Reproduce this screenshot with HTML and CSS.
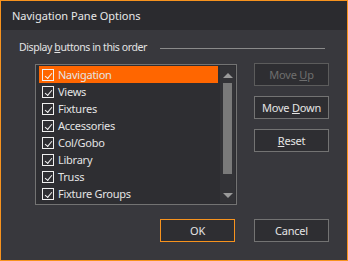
FILE: index.html
```html
<!DOCTYPE html>
<html lang="en">
<head>
    <meta charset="UTF-8">
    <title>Navigation Pane Options</title>
    <link rel="stylesheet" href="styles.css">
</head>
<body>
    <div class="window">
        <div class="titlebar">Navigation Pane Options</div>

        <div class="content">
            <div class="group-header">
                <span class="group-label">Display <u>b</u>uttons in this order</span>
                <span class="group-line"></span>
            </div>

            <div class="main-row">
                <div class="listbox">
                    <ul class="items">
                        <li class="selected"><span class="check"></span>Navigation</li>
                        <li><span class="check"></span>Views</li>
                        <li><span class="check"></span>Fixtures</li>
                        <li><span class="check"></span>Accessories</li>
                        <li><span class="check"></span>Col/Gobo</li>
                        <li><span class="check"></span>Library</li>
                        <li><span class="check"></span>Truss</li>
                        <li><span class="check"></span>Fixture Groups</li>
                    </ul>
                    <div class="scrollbar">
                        <span class="arrow up"></span>
                        <div class="track"><div class="thumb"></div></div>
                        <span class="arrow down"></span>
                    </div>
                </div>

                <div class="side-buttons">
                    <button class="btn" disabled>Move <u>U</u>p</button>
                    <button class="btn">Move <u>D</u>own</button>
                    <button class="btn"><u>R</u>eset</button>
                </div>
            </div>

            <div class="footer">
                <button class="btn default">OK</button>
                <button class="btn">Cancel</button>
            </div>
        </div>
    </div>
</body>
</html>
```

FILE: styles.css
```css
:root {
    --frame: #f7931e;
    --bg: #38383d;
    --title-bg: #2b2b2f;
    --field-bg: #2e2e32;
    --text: #e4e4e4;
    --muted: #6e6e6e;
    --border: #737373;
    --select: #ff6600;
}

* {
    box-sizing: border-box;
}

body {
    margin: 0;
    font-family: 'Noto Sans', 'Open Sans', sans-serif;
    font-size: 11px;
    letter-spacing: -0.25px;
    color: var(--text);
    background: var(--bg);
}

.window {
    width: 348px;
    height: 261px;
    border: 1px solid var(--frame);
    background: var(--bg);
    display: flex;
    flex-direction: column;
}

.titlebar {
    height: 29px;
    line-height: 29px;
    padding-left: 11px;
    background: var(--title-bg);
    color: #e8e8e8;
    letter-spacing: 0;
}

.content {
    padding: 9px 18px 0 18px;
}

.group-header {
    display: flex;
    align-items: center;
    height: 16px;
    line-height: 16px;
}

.group-label {
    font-size: 10.5px;
    letter-spacing: -0.4px;
}

.group-line {
    flex: 1;
    height: 1px;
    margin: 2px 4px 0 13px;
    background: #8a8a8a;
}

.main-row {
    display: flex;
    margin-top: 9px;
    padding-left: 16px;
}

.listbox {
    width: 203px;
    height: 141px;
    border: 1px solid var(--border);
    background: var(--field-bg);
    display: flex;
    padding: 1px 1px 1px 3px;
}

.items {
    list-style: none;
    margin: 0;
    padding: 0;
    width: 179px;
}

.items li {
    height: 17px;
    line-height: 17px;
    display: flex;
    align-items: center;
    padding-left: 3px;
}

.items li.selected {
    background: var(--select);
}

.check {
    width: 12px;
    height: 12px;
    border: 1px solid #f0f0f0;
    margin-right: 4px;
    position: relative;
    flex: none;
}

.check::after {
    content: '';
    position: absolute;
    left: 2px;
    top: 0px;
    width: 6px;
    height: 3px;
    border-left: 1.5px solid #f4f4f4;
    border-bottom: 1.5px solid #f4f4f4;
    transform: translate(0, 3px) rotate(-50deg);
}

.scrollbar {
    flex: 1;
    margin-left: 2px;
    display: flex;
    flex-direction: column;
    align-items: center;
    background: #333337;
}

.arrow {
    width: 0;
    height: 0;
    border-left: 5px solid transparent;
    border-right: 5px solid transparent;
    margin: 7px 0 5px;
}

.arrow.up {
    border-bottom: 5px solid #9a9a9a;
}

.arrow.down {
    border-top: 5px solid #9a9a9a;
    margin: 6px 0 5px;
}

.track {
    flex: 1;
    width: 9px;
}

.thumb {
    width: 9px;
    height: 91px;
    background: #7a7a7a;
}

.side-buttons {
    display: flex;
    flex-direction: column;
    gap: 10px;
    margin-left: 17px;
    margin-top: -1px;
}

.btn {
    width: 75px;
    height: 23px;
    padding: 0;
    font-family: inherit;
    font-size: 11px;
    letter-spacing: -0.2px;
    color: var(--text);
    background: var(--field-bg);
    border: 1px solid var(--border);
}

.btn:disabled {
    color: var(--muted);
    border-color: #5c5c5c;
}

.btn.default {
    border-color: var(--frame);
}

.footer {
    display: flex;
    justify-content: flex-end;
    gap: 19px;
    margin-top: 14px;
}
```
